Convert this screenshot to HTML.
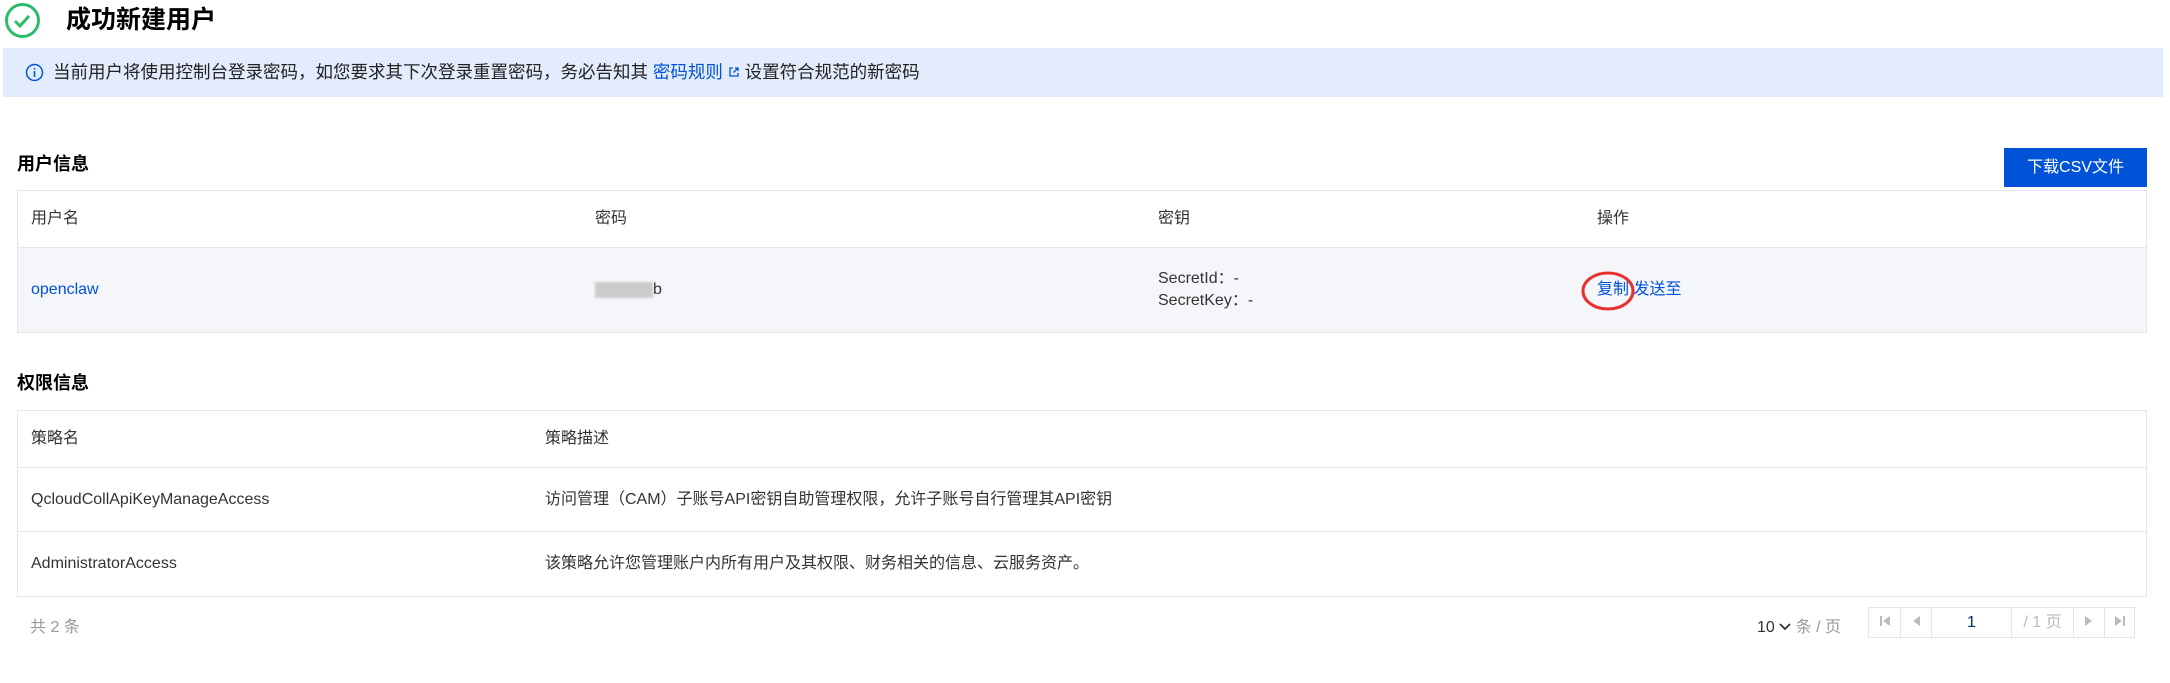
<!DOCTYPE html>
<html><head><meta charset="utf-8"><style>
*{margin:0;padding:0;box-sizing:border-box}
body{width:2170px;height:683px;background:#fff;font-family:"Liberation Sans","Noto Sans CJK SC",sans-serif;color:#333;position:relative;overflow:hidden;font-size:16px}
.abs{position:absolute;white-space:nowrap}
.title{left:66px;top:5px;font-size:25px;font-weight:bold;color:#000;line-height:30px}
.banner{left:3px;top:48px;width:2160px;height:49px;background:#e3ecfd}
.banner span.t{position:absolute;left:50px;top:14px;font-size:17.5px;color:#222;line-height:20px}
.link{color:#0052d9}
.h2{font-size:18px;font-weight:bold;color:#000;left:17px}
.btn{left:2004px;top:148px;width:143px;height:39px;background:#0052d9;color:#fff;font-size:16px;text-align:center;line-height:39px}
.tbl{position:absolute;left:17px;width:2130px;border:1px solid #e5e7ec}
.row{position:relative;border-top:1px solid #e5e7ec}
.row:first-child{border-top:none}
.cell{position:absolute;top:50%;transform:translateY(-50%);font-size:16px;line-height:20px;height:20px;color:#333;white-space:nowrap}
.cell.link{color:#0052d9}
.pg{position:absolute;top:607px;height:31px;border:1px solid #e3e5ea;color:#bbb;font-size:16px;text-align:center;line-height:29px}
</style></head><body>
<svg class="abs" style="left:4px;top:2px" width="37" height="37" viewBox="0 0 37 37"><circle cx="18.5" cy="18.5" r="16" fill="none" stroke="#2bbd6a" stroke-width="3"/><path d="M11 19l5 5 9-10" fill="none" stroke="#2bbd6a" stroke-width="3"/></svg>
<div class="abs title">成功新建用户</div>
<div class="abs banner">
<svg style="position:absolute;left:22px;top:15px" width="19" height="19" viewBox="0 0 19 19"><circle cx="9.5" cy="9.5" r="8" fill="none" stroke="#0052d9" stroke-width="1.5"/><path d="M9.5 8v6M9.5 5v1.5" stroke="#0052d9" stroke-width="1.6"/></svg>
<span class="t">当前用户将使用控制台登录密码，如您要求其下次登录重置密码，务必告知其 <span class="link">密码规则 <svg width="12" height="12" viewBox="0 0 12 12"><path d="M5 2H2v8h8V7M7 2h3v3M10 2L5.5 6.5" fill="none" stroke="#0052d9" stroke-width="1.3"/></svg></span> 设置符合规范的新密码</span>
</div>
<div class="abs h2" style="top:150px">用户信息</div>
<div class="abs btn">下载CSV文件</div>
<div class="tbl" style="top:190px">
 <div class="row" style="height:56px"><span class="cell" style="left:13px">用户名</span><span class="cell" style="left:577px">密码</span><span class="cell" style="left:1140px">密钥</span><span class="cell" style="left:1579px">操作</span></div>
 <div class="row" style="height:85px;background:#f4f6fa">
  <span class="cell link" style="left:13px">openclaw</span>
  <span class="cell" style="left:577px"><span style="display:inline-block;width:58px;height:16px;background:#ccc;vertical-align:middle;filter:blur(1px)"></span>b</span>
  <span class="cell" style="left:1140px;line-height:22px;height:44px">SecretId：-<br>SecretKey：-</span>
  <span class="cell link" style="left:1579px">复制 发送至</span>
  <svg style="position:absolute;left:1563px;top:22px" width="56" height="42"><ellipse cx="27" cy="21" rx="25" ry="18" fill="none" stroke="#e8312f" stroke-width="3"/></svg>
 </div>
</div>
<div class="abs h2" style="top:369px">权限信息</div>
<div class="tbl" style="top:410px">
 <div class="row" style="height:56px"><span class="cell" style="left:13px">策略名</span><span class="cell" style="left:527px">策略描述</span></div>
 <div class="row" style="height:64px"><span class="cell" style="left:13px">QcloudCollApiKeyManageAccess</span><span class="cell" style="left:527px">访问管理（CAM）子账号API密钥自助管理权限，允许子账号自行管理其API密钥</span></div>
 <div class="row" style="height:65px"><span class="cell" style="left:13px">AdministratorAccess</span><span class="cell" style="left:527px">该策略允许您管理账户内所有用户及其权限、财务相关的信息、云服务资产。</span></div>
</div>
<div class="abs" style="left:30px;top:613px;color:#999;font-size:16px">共 2 条</div>
<div class="abs" style="left:1757px;top:613px;font-size:16px;color:#333">10 <svg width="12" height="10"><path d="M1 2l5 5 5-5" fill="none" stroke="#333" stroke-width="1.8"/></svg> <span style="color:#999">条 / 页</span></div>
<div class="pg" style="left:1868px;width:33px"><svg width="12" height="12"><path d="M2 1v10" stroke="#bbb" stroke-width="2"/><path d="M11 1v10L4 6z" fill="#bbb"/></svg></div>
<div class="pg" style="left:1900px;width:32px"><svg width="10" height="12"><path d="M9 1v10L2 6z" fill="#bbb"/></svg></div>
<div class="pg" style="left:1931px;width:81px;color:#002a7c">1</div>
<div class="pg" style="left:2011px;width:63px">/ 1 页</div>
<div class="pg" style="left:2073px;width:32px"><svg width="10" height="12"><path d="M1 1v10L8 6z" fill="#bbb"/></svg></div>
<div class="pg" style="left:2104px;width:31px"><svg width="12" height="12"><path d="M1 1v10L8 6z" fill="#bbb"/><path d="M10 1v10" stroke="#bbb" stroke-width="2"/></svg></div>
</body></html>
